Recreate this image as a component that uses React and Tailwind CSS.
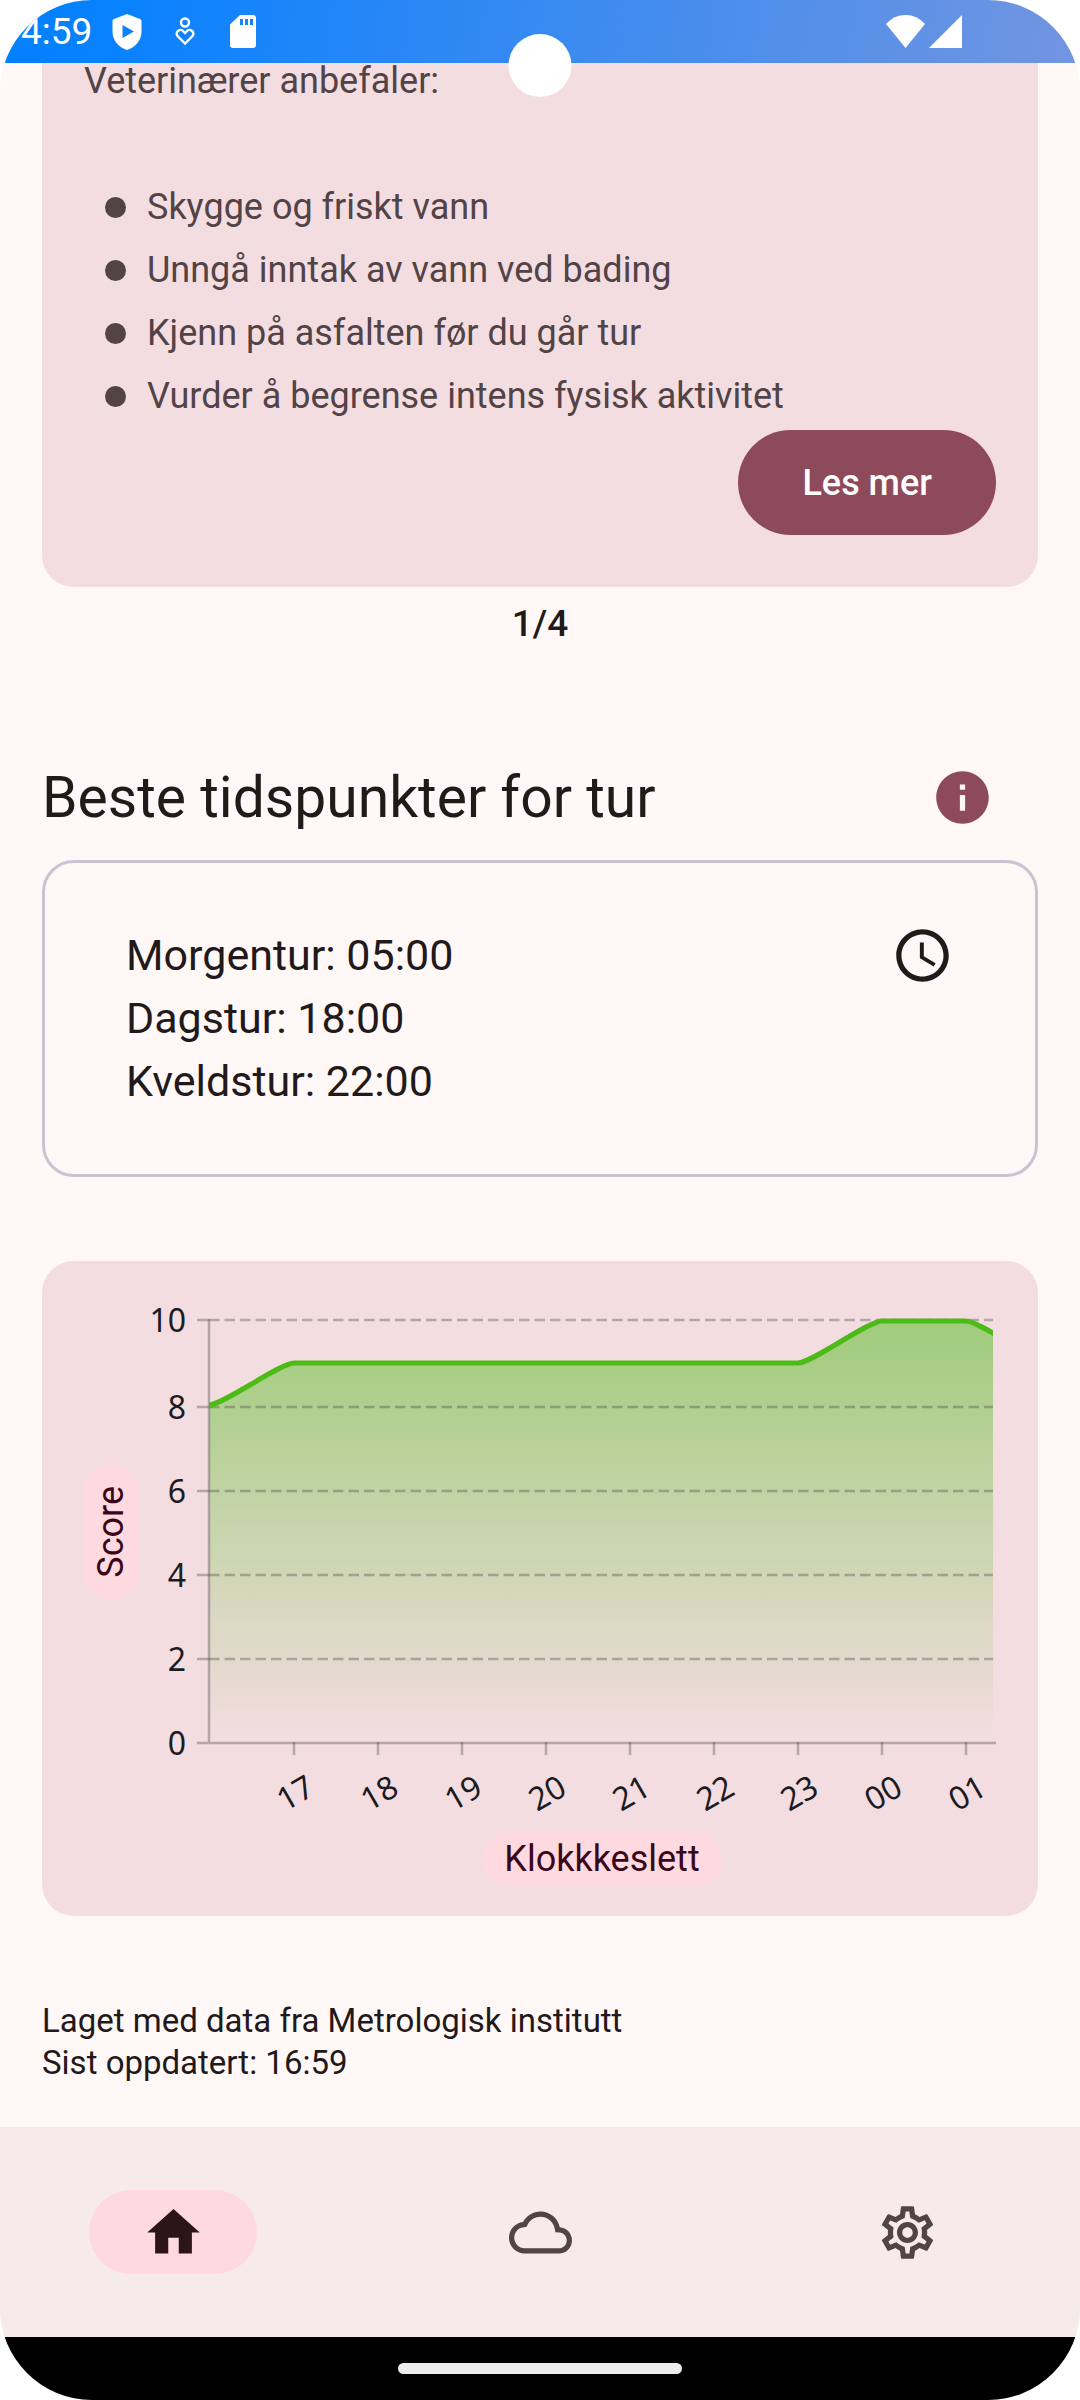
import React from "react";
import { MdOutlineSettings } from "react-icons/md";

const advice = [
  "Skygge og friskt vann",
  "Unngå inntak av vann ved bading",
  "Kjenn på asfalten før du går tur",
  "Vurder å begrense intens fysisk aktivitet",
];

const walks = ["Morgentur: 05:00", "Dagstur: 18:00", "Kveldstur: 22:00"];

const yTicks = [
  { label: "10", y: 59 },
  { label: "8", y: 146 },
  { label: "6", y: 230 },
  { label: "4", y: 314 },
  { label: "2", y: 398 },
];

const xTicks = ["17", "18", "19", "20", "21", "22", "23", "00", "01"];

const line =
  "M71 144C85 144 142 102 156 102H660C674 102 730 60 744 60H828C842 60 898 102 912 102";

function StatusBar() {
  return (
    <header className="relative flex h-[63px] items-center bg-[linear-gradient(100deg,#0080ff_0%,#0a82fe_12%,#7395e0_100%)] pr-[118px] pl-[21px] text-white">
      <span className="w-[71px] text-[37px] leading-none">4:59</span>
      <svg className="ml-5 h-9 w-[30px] shrink-0" viewBox="0 0 30 36" aria-label="Play Protect">
        <path
          fill="currentColor"
          fillRule="evenodd"
          d="M15 0 28 5q1.500 .6 1.500 2.200V18c0 8-6 15.500-14.500 18C6.500 33.500.5 26 .5 18V7.200Q.5 5.600 2 5ZM10.500 11v13L22 17.500Z"
        />
      </svg>
      <svg className="ml-[33px] h-[29px] w-5 shrink-0" viewBox="0 0 20 29" fill="none" stroke="currentColor" strokeWidth="2.400" aria-label="Helse">
        <circle cx="10" cy="5.500" r="4" />
        <path d="M10 26.500 3 19.500C-1 15.500 5 10.500 8.500 14.500L10 16l1.500-1.500C15 10.500 21 15.500 17 19.500Z" />
      </svg>
      <svg className="ml-[35px] h-[33px] w-[26px] shrink-0" viewBox="0 0 26 33" aria-label="Minnekort">
        <path
          fill="currentColor"
          fillRule="evenodd"
          d="M10 0H23q3 0 3 3V30q0 3-3 3H3q-3 0-3-3V9.500ZM10 4v6h3V4ZM15 4v6h3V4ZM20 4v6h3V4Z"
        />
      </svg>
      <svg className="ml-auto h-[33px] w-[39px] shrink-0" viewBox="0 0 39 33" aria-label="Wifi">
        <path fill="currentColor" d="M0 9Q8 0 19.500 0T39 9L19.500 33Z" />
      </svg>
      <svg className="ml-1 h-[33px] w-[33px] shrink-0" viewBox="0 0 33 33" aria-label="Mobilsignal">
        <path fill="currentColor" d="M33 0V33H0Z" />
      </svg>
      <span className="absolute top-[34px] left-1/2 z-10 size-[63px] -translate-x-1/2 rounded-full bg-white" />
    </header>
  );
}

function AdviceCard() {
  return (
    <section className="flex flex-col rounded-b-[32px] bg-[#f3dde0] px-[42px] pb-[52px] text-[36px] text-[#524346]">
      <p className="leading-[37px]">Veterinærer anbefaler:</p>
      <ul className="mt-[76px] pl-[21px] leading-[63px]">
        {advice.map((item) => (
          <li key={item} className="flex items-center gap-[21px]">
            <span className="size-[21px] shrink-0 rounded-full bg-[#524346]" />
            {item}
          </li>
        ))}
      </ul>
      <button className="mt-[2px] h-[105px] self-end rounded-full bg-[#8d4a5b] px-16 font-medium text-white">
        Les mer
      </button>
    </section>
  );
}

function ScoreChart() {
  return (
    <svg className="h-auto min-w-0 flex-1" viewBox="0 0 900 571" role="img" aria-label="Score per time">
      <defs>
        <linearGradient id="area" x1="0" y1="60" x2="0" y2="482" gradientUnits="userSpaceOnUse">
          <stop offset="0" stopColor="#4cbb17" stopOpacity="0.5" />
          <stop offset="1" stopColor="#4cbb17" stopOpacity="0" />
        </linearGradient>
        <clipPath id="plot">
          <rect x="71" y="0" width="784" height="482" />
        </clipPath>
      </defs>
      <g clipPath="url(#plot)">
        <path d={`${line}V482H71Z`} fill="url(#area)" />
      </g>
      <g stroke="#444444" strokeOpacity="0.36" strokeWidth="2.500">
        {yTicks.map((t) => (
          <React.Fragment key={t.label}>
            <path d={`M59 ${t.y}H71`} />
            <path d={`M71 ${t.y}H855`} strokeDasharray="10.500 5" />
          </React.Fragment>
        ))}
        <path d="M59 482H858M71 58V483" />
        {xTicks.map((t, i) => (
          <path key={t} d={`M${156 + i * 84} 481V494`} />
        ))}
      </g>
      <g clipPath="url(#plot)">
        <path d={line} fill="none" stroke="#4cbb17" strokeWidth="5" />
      </g>
      <g className="font-['Noto_Sans',sans-serif] text-[32px]" fill="#1c1b1f">
        {[...yTicks, { label: "0", y: 482 }].map((t) => (
          <text key={t.label} x="48" y={t.y + 12} textAnchor="end">
            {t.label}
          </text>
        ))}
        {xTicks.map((t, i) => (
          <text key={t} transform={`translate(${147 + i * 84} 551) rotate(-30)`}>
            {t}
          </text>
        ))}
      </g>
    </svg>
  );
}

function ChartCard() {
  return (
    <section className="mt-[84px] rounded-[32px] bg-[#f3dde0] pb-[30px] text-[36px] text-[#3a071a]">
      <div className="flex items-start pl-[42px]">
        <span className="mt-[203px] w-[54px] shrink-0 rotate-180 rounded-full bg-[#ffd9e0] px-[22px] leading-[54px] [writing-mode:vertical-rl]">
          Score
        </span>
        <ScoreChart />
      </div>
      <div className="flex justify-center pr-[43px] pl-[167px]">
        <span className="rounded-full bg-[#ffd9e0] px-[22px] leading-[54px]">Klokkkeslett</span>
      </div>
    </section>
  );
}

function HomeIcon({ className }) {
  return (
    <svg className={className} viewBox="0 0 24 24" fill="currentColor">
      <path d="M10 20v-6h4v6h5v-8h3L12 3 2 12h3v8z" />
    </svg>
  );
}

function CloudIcon({ className }) {
  return (
    <svg className={className} viewBox="0 0 24 24" fill="currentColor">
      <path d="M19.350 10.040C18.670 6.590 15.640 4 12 4 9.110 4 6.600 5.640 5.350 8.040 2.340 8.360 0 10.910 0 14c0 3.310 2.690 6 6 6h13c2.760 0 5-2.240 5-5 0-2.640-2.050-4.780-4.650-4.960zM19 18H6c-2.210 0-4-1.790-4-4 0-2.050 1.530-3.760 3.560-3.970l1.070-.11.5-.95C8.080 7.140 9.940 6 12 6c2.620 0 4.880 1.860 5.390 4.430l.3 1.500 1.530.11c1.560.1 2.780 1.410 2.780 2.960 0 1.650-1.350 3-3 3z" />
    </svg>
  );
}

const navItems = [
  { label: "Hjem", active: true, Icon: HomeIcon },
  { label: "Vær", Icon: CloudIcon },
  { label: "Innstillinger", Icon: MdOutlineSettings },
];

function BottomNav() {
  return (
    <nav className="mt-auto grid h-[210px] grid-cols-3 items-center gap-[21px] bg-[#f6eaea]">
      {navItems.map(({ label, active, Icon }) => (
        <button
          key={label}
          aria-label={label}
          className={
            active
              ? "flex h-[84px] w-[168px] items-center justify-center justify-self-center rounded-full bg-[#ffd9e0] text-[#2b151b]"
              : "flex h-[84px] w-[168px] items-center justify-center justify-self-center rounded-full text-[#524346]"
          }
        >
          <Icon className="size-[63px]" />
        </button>
      ))}
    </nav>
  );
}

export default function App() {
  return (
    <div className="flex min-h-screen flex-col overflow-hidden rounded-[92px] bg-[#fff8f7] font-[Roboto,sans-serif] text-[#22191b]">
      <StatusBar />
      <main className="px-[42px] pb-[43px]">
        <AdviceCard />
        <p className="mt-[10px] text-center text-[37px] leading-[53px] font-medium">1/4</p>
        <div className="mt-[116px] flex items-center justify-between pr-[44px]">
          <h1 className="text-[57px] leading-[63px]">Beste tidspunkter for tur</h1>
          <button aria-label="Informasjon" className="text-[#8d4a5b]">
            <svg className="size-[63px]" viewBox="0 0 24 24" fill="currentColor">
              <path d="M12 2C6.480 2 2 6.480 2 12s4.480 10 10 10 10-4.480 10-10S17.520 2 12 2zm1 15h-2v-6h2v6zm0-8h-2V7h2v2z" />
            </svg>
          </button>
        </div>
        <section className="mt-[31px] flex items-start justify-between rounded-[32px] border-3 border-[#cac4d0] px-[81px] py-[61px]">
          <div className="text-[43px] leading-[63px]">
            {walks.map((walk) => (
              <p key={walk}>{walk}</p>
            ))}
          </div>
          <svg className="size-[63px] shrink-0" viewBox="0 0 24 24" fill="currentColor" aria-hidden="true">
            <path d="M11.990 2C6.470 2 2 6.480 2 12s4.470 10 9.990 10C17.520 22 22 17.520 22 12S17.520 2 11.990 2zM12 20c-4.420 0-8-3.580-8-8s3.580-8 8-8 8 3.580 8 8-3.580 8-8 8zm.5-13H11v6l5.250 3.150.75-1.230-4.500-2.670z" />
          </svg>
        </section>
        <ChartCard />
        <footer className="mt-[84px] text-[33px] leading-[42px]">
          <p>Laget med data fra Metrologisk institutt</p>
          <p>Sist oppdatert: 16:59</p>
        </footer>
      </main>
      <BottomNav />
      <div className="flex h-[63px] items-center justify-center bg-black">
        <span className="h-[11px] w-[284px] rounded-full bg-[#ececec]" />
      </div>
    </div>
  );
}
